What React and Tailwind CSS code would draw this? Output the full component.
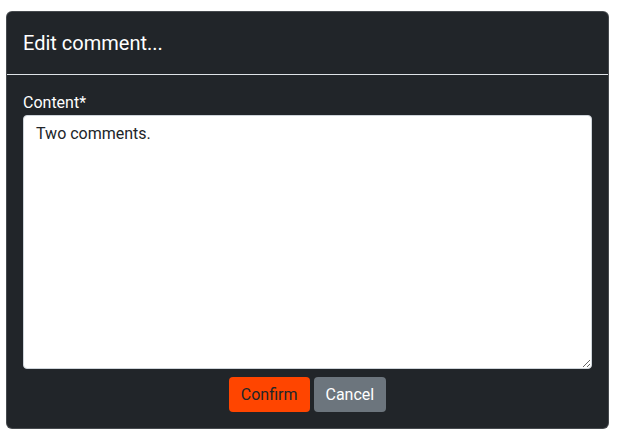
import React, { useState } from "react";

export default function App() {
  const [content, setContent] = useState("Two comments.");

  return (
    <div className="min-h-screen bg-white pl-[6px] pt-[11px] font-['Roboto',sans-serif]">
      <div className="w-[603px] rounded-md border border-[#dee2e6]/20 bg-[#212529] text-white">
        <div className="border-b border-[#dee2e6] px-4 py-4">
          <h5 className="text-[20px] leading-[30px] font-normal">Edit comment...</h5>
        </div>

        <div className="px-4 pt-4 pb-[16px]">
          <label className="block text-base leading-6">Content*</label>
          <textarea
            value={content}
            onChange={(e) => setContent(e.target.value)}
            className="block h-[254px] w-full rounded border border-[#ced4da] bg-white px-3 py-1.5 text-base leading-6 text-[#212529] outline-none"
          />
          <div className="mt-2 flex justify-center gap-1">
            <button className="h-[35px] rounded bg-[#ff4500] px-3 text-base text-[#212529]">
              Confirm
            </button>
            <button className="h-[35px] rounded bg-[#6c757d] px-3 text-base text-white">
              Cancel
            </button>
          </div>
        </div>
      </div>
    </div>
  );
}
